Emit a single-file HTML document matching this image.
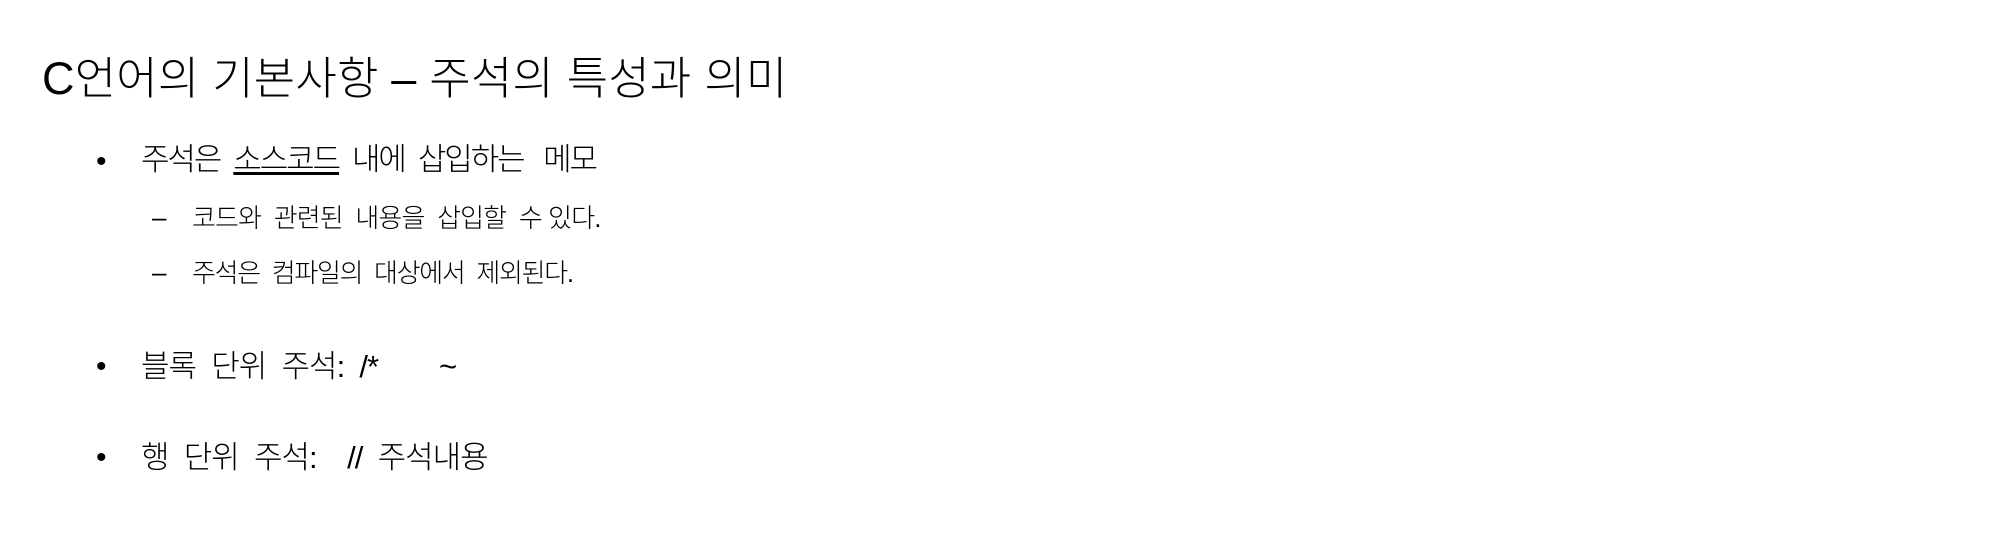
<!DOCTYPE html>
<html><head><meta charset="utf-8"><style>
body{margin:0;width:2002px;height:533px;background:#fff;overflow:hidden;font-family:"Liberation Sans","Noto Sans CJK KR","NanumGothic",sans-serif;color:#000}
.t{position:absolute;white-space:pre;line-height:1}
</style></head><body>
<div class="t" style="left:42px;top:56px;font-size:45px;font-weight:300;letter-spacing:0.2px;">C언어의 기본사항 – 주석의 특성과 의미</div>
<div class="t" style="left:96px;top:147px;font-size:30px;">•</div>
<div class="t" style="left:141px;top:144px;font-size:31px;letter-spacing:-2.1px;font-weight:300;">주석은  <u>소스코드</u>  내에  삽입하는   메모</div>
<div class="t" style="left:152px;top:204px;font-size:26px;">–</div>
<div class="t" style="left:192px;top:205px;font-size:26px;letter-spacing:-0.9px;font-weight:300;">코드와  관련된  내용을  삽입할  수 있다.</div>
<div class="t" style="left:152px;top:259px;font-size:26px;">–</div>
<div class="t" style="left:192px;top:260px;font-size:26px;letter-spacing:-1.3px;font-weight:300;">주석은  컴파일의  대상에서  제외된다.</div>
<div class="t" style="left:96px;top:352px;font-size:30px;">•</div>
<div class="t" style="left:141px;top:351px;font-size:31px;letter-spacing:-1px;font-weight:300;">블록  단위  주석:  /*        ~</div>
<div class="t" style="left:96px;top:443px;font-size:30px;">•</div>
<div class="t" style="left:141px;top:442px;font-size:31px;letter-spacing:-1px;font-weight:300;">행  단위  주석:    //  주석내용</div>
</body></html>
